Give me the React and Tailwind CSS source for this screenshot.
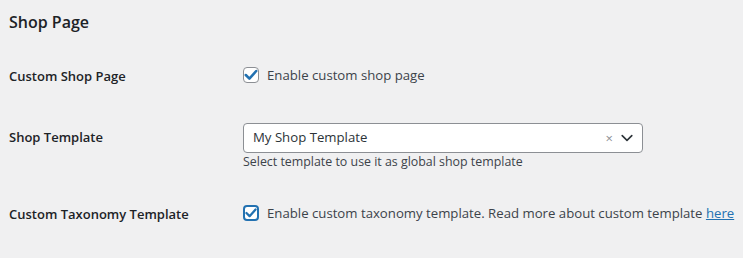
import React from "react";

function Check({ focused }) {
  return (
    <span
      className={
        "flex items-center justify-center w-4 h-4 bg-white rounded-[4px] shrink-0 overflow-hidden " +
        (focused ? "border-2 border-[#2271b1]" : "border border-[#8c8f94]")
      }
    >
      <svg viewBox="0 0 20 20" className={focused ? "w-[14px] h-[14px] shrink-0" : "w-[16px] h-[16px] shrink-0"} fill="none">
        <path d="M3.5 10l4.5 4.5L16.5 5" stroke="#2271b1" strokeWidth="3.2" strokeLinecap="round" strokeLinejoin="round" />
      </svg>
    </span>
  );
}

export default function App() {
  return (
    <div
      className="w-[743px] h-[258px] bg-[#f0f0f1] pl-[9px] pt-[10px] text-[13.2px] text-[#3c434a] whitespace-nowrap"
      style={{ fontFamily: '"Open Sans", "Noto Sans", sans-serif' }}
    >
      <h2 className="text-[16px] leading-[24px] font-semibold text-[#1d2327]">Shop Page</h2>

      <div className="flex mt-[33px] h-4 items-center">
        <div className="w-[234px] text-[13px] font-semibold text-[#1d2327] leading-4 pt-px">Custom Shop Page</div>
        <label className="flex items-center gap-2 leading-4">
          <Check />
          <span>Enable custom shop page</span>
        </label>
      </div>

      <div className="flex mt-[40px]">
        <div className="w-[234px] text-[13px] font-semibold text-[#1d2327] leading-[28px]">Shop Template</div>
        <div className="flex flex-col">
          <div className="w-[400px] h-[30px] bg-white border border-[#8c8f94] rounded-[4px] flex items-center pl-[9px] pr-[7px] text-[#2c3338]">
            <span className="flex-1">My Shop Template</span>
            <span className="text-[#8c8f94] text-[13px] mr-[6px] leading-none">×</span>
            <svg viewBox="0 0 20 20" className="w-[16px] h-[16px]" fill="none">
              <path d="M4 7l6 6 6-6" stroke="#2c3338" strokeWidth="2" strokeLinecap="round" strokeLinejoin="round" />
            </svg>
          </div>
          <div className="text-[12.4px] leading-[18px]">Select template to use it as global shop template</div>
        </div>
      </div>

      <div className="flex mt-[34px] h-4 items-center">
        <div className="w-[234px] text-[13px] font-semibold text-[#1d2327] leading-4 pt-px">Custom Taxonomy Template</div>
        <label className="flex items-center gap-2 leading-4">
          <Check focused />
          <span>
            Enable custom taxonomy template. Read more about custom template{" "}
            <a className="text-[#2271b1] underline">here</a>
          </span>
        </label>
      </div>
    </div>
  );
}
